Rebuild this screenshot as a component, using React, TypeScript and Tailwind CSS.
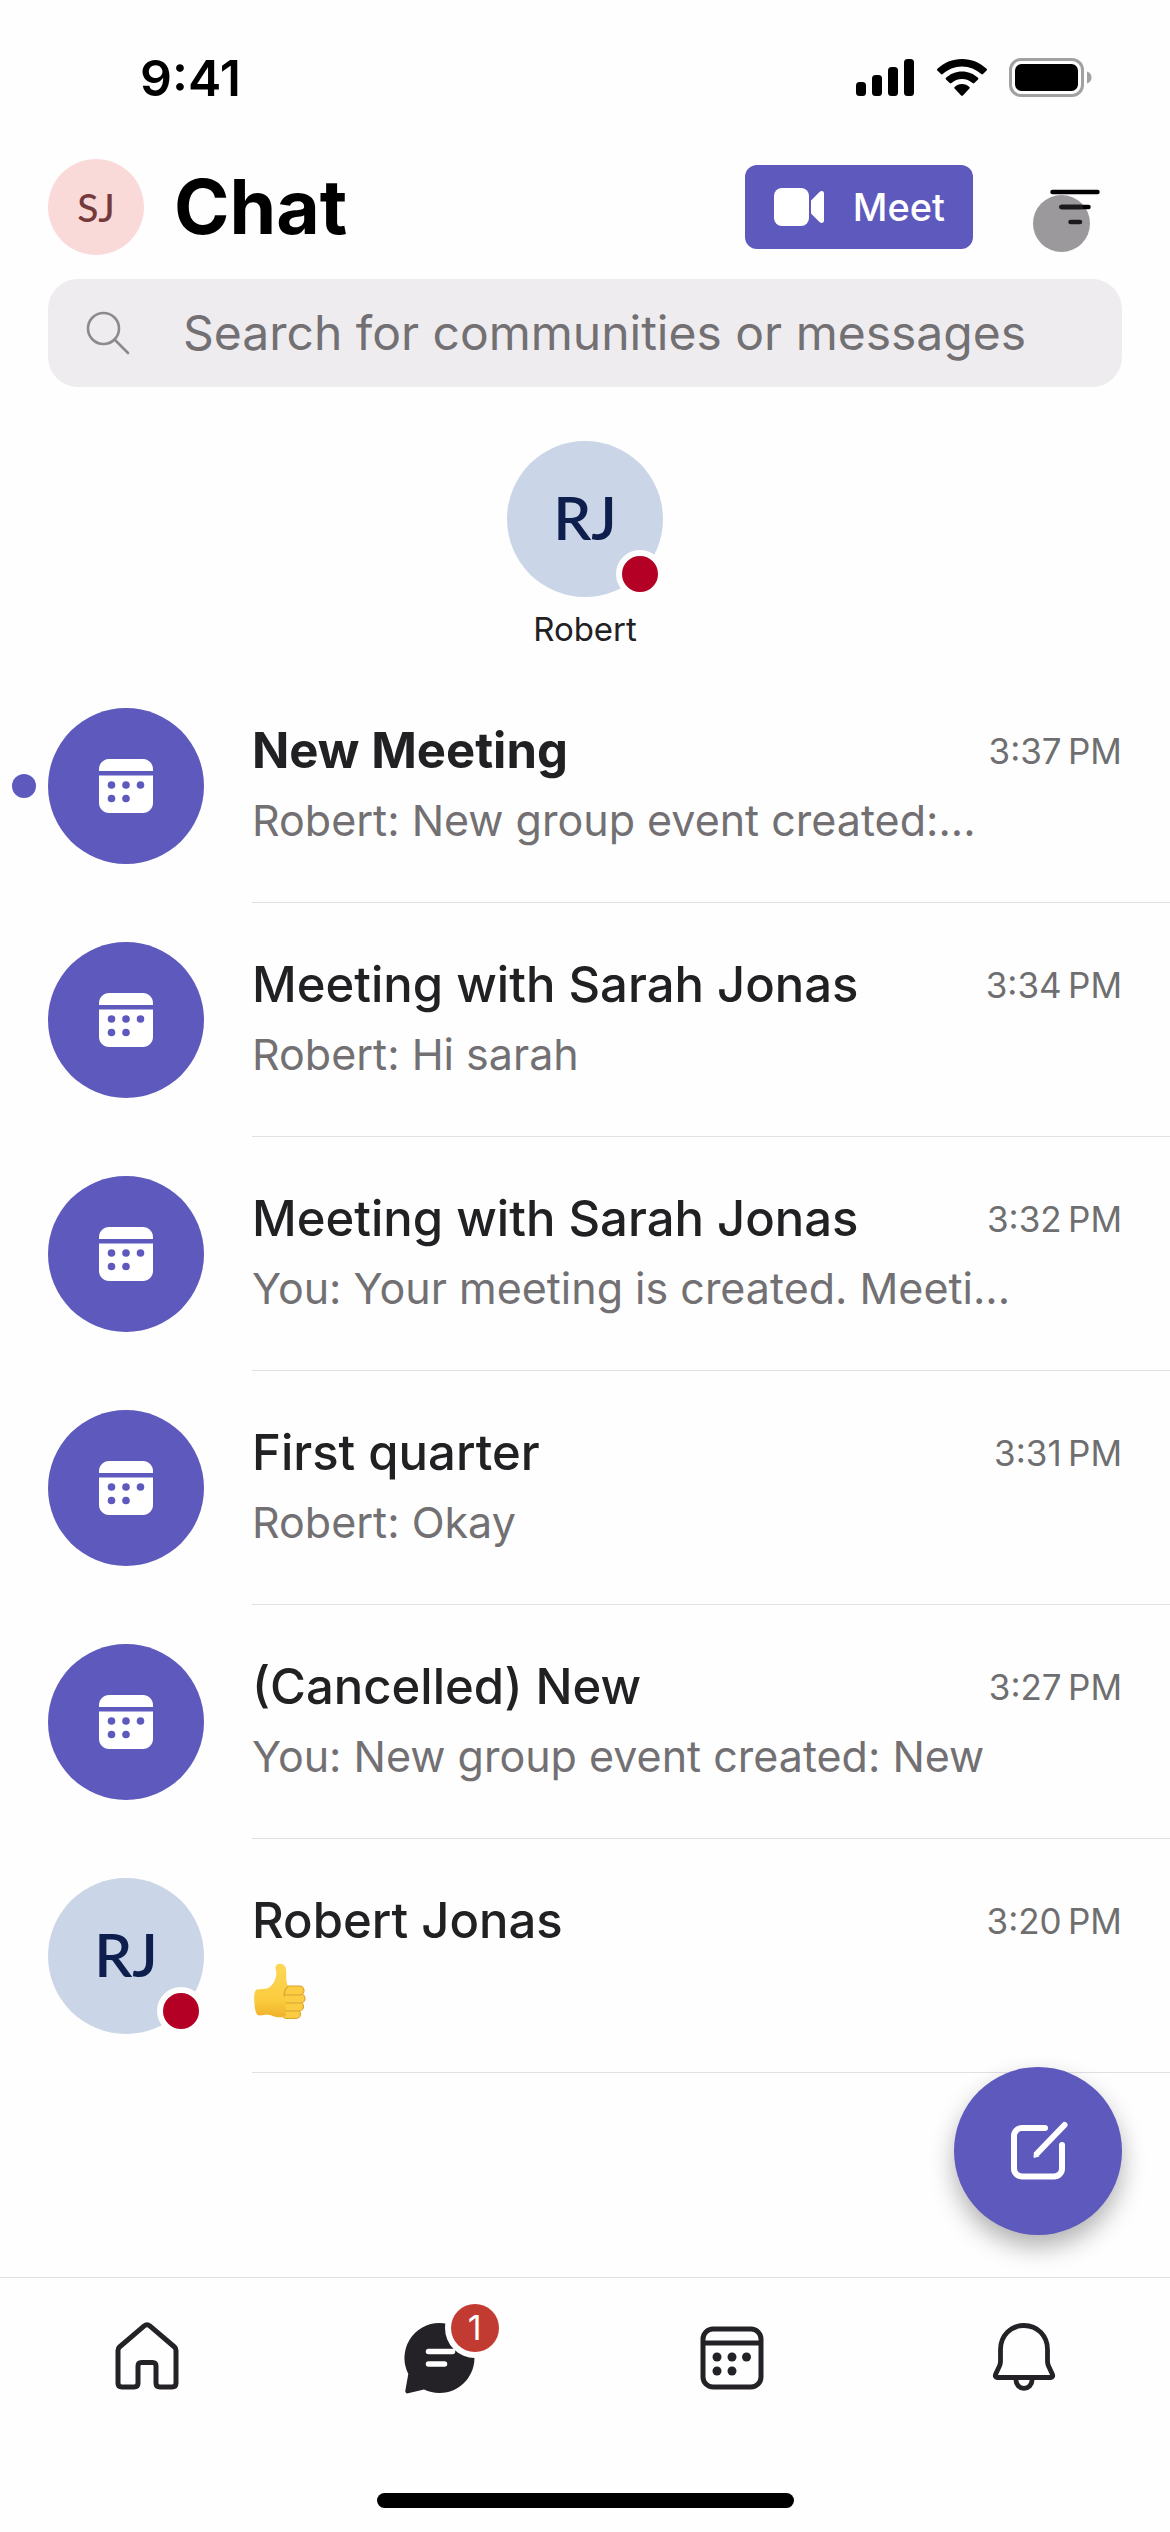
import { ReactNode } from 'react';

import clsx from 'clsx';

type ChatItem = {
  id: number;
  title: string;
  preview?: string;
  time: string;
  unread?: boolean;
  initials?: string;
};

const CHATS: ChatItem[] = [
  {
    id: 1,
    title: 'New Meeting',
    preview: 'Robert: New group event created:...',
    time: '3:37\u202fPM',
    unread: true,
  },
  { id: 2, title: 'Meeting with Sarah Jonas', preview: 'Robert: Hi sarah', time: '3:34\u202fPM' },
  {
    id: 3,
    title: 'Meeting with Sarah Jonas',
    preview: 'You: Your meeting is created. Meeti...',
    time: '3:32\u202fPM',
  },
  { id: 4, title: 'First quarter', preview: 'Robert: Okay', time: '3:31\u202fPM' },
  {
    id: 5,
    title: '(Cancelled) New',
    preview: 'You: New group event created: New',
    time: '3:27\u202fPM',
  },
  { id: 6, title: 'Robert Jonas', time: '3:20\u202fPM', initials: 'RJ' },
];

const StatusIcons = () => (
  <div className="flex items-center">
    <svg width="58" height="38" viewBox="0 0 58 38" className="mr-[23px]">
      <rect x="0" y="23" width="10" height="14" rx="3.5" />
      <rect x="16" y="16" width="10" height="21" rx="3.5" />
      <rect x="32" y="8" width="10" height="29" rx="3.5" />
      <rect x="48" y="0" width="10" height="37" rx="3.5" />
    </svg>
    <svg width="50" height="38" viewBox="0 0 50 38" className="mr-[22px]">
      <path d="M25 0C34.5 0 43.2 3.7 49.6 9.8c.5.5.5 1.2 0 1.7l-3.600 3.600c-.5.5-1.200.5-1.700 0C39.200 10.400 32.400 7.500 25 7.500S10.800 10.400 5.700 15.100c-.5.5-1.200.5-1.700 0L.4 11.500c-.5-.5-.5-1.200 0-1.700C6.800 3.700 15.500 0 25 0z" />
      <path d="M25 12.500c6.200 0 11.800 2.400 16 6.300.5.5.5 1.200 0 1.700l-3.700 3.600c-.5.5-1.200.5-1.700 0C32.800 21.600 29.100 20 25 20s-7.800 1.600-10.600 4.100c-.5.5-1.200.5-1.700 0L9 20.500c-.5-.5-.5-1.200 0-1.700 4.200-3.900 9.800-6.300 16-6.300z" />
      <path d="M25 25c2.900 0 5.500 1.100 7.400 2.900.5.5.5 1.200 0 1.700l-6.500 6.800c-.5.5-1.300.5-1.800 0l-6.500-6.800c-.5-.5-.5-1.200 0-1.700C19.500 26.100 22.100 25 25 25z" />
    </svg>
    <svg width="83" height="40" viewBox="0 0 83 40">
      <rect x="1.500" y="1.500" width="72" height="36" rx="10.500" fill="none" stroke="#a2a0a3" strokeWidth="3" />
      <rect x="6" y="6" width="63" height="27" rx="6.500" />
      <path d="M78 13.500c3 1 4.500 3.200 4.500 6s-1.500 5-4.500 6z" fill="#a2a0a3" />
    </svg>
  </div>
);

const CameraIcon = () => (
  <svg width="52" height="40" viewBox="0 0 52 40" fill="#fff" className="shrink-0">
    <rect x="1" y="1" width="35" height="38" rx="8" />
    <path d="M38 13.500L46.500 5c1.800-1.800 4.500-1.200 4.500 1.400v27.200c0 2.600-2.700 3.200-4.500 1.400L38 26.500z" />
  </svg>
);

const FilterIcon = () => (
  <svg width="50" height="36" viewBox="0 0 50 36" stroke="#000" strokeWidth="4.500" strokeLinecap="round">
    <path d="M2.500 3h45" />
    <path d="M11.500 18h27" />
    <path d="M11.500 18h19.500" stroke="#1c1a1d" />
    <path d="M20.500 33h9.500" stroke="#1c1a1d" />
  </svg>
);

const SearchIcon = () => (
  <svg
    width="44"
    height="44"
    viewBox="0 0 44 44"
    fill="none"
    stroke="#8c8a8d"
    strokeWidth="2.600"
    strokeLinecap="round"
    className="shrink-0"
  >
    <circle cx="17.500" cy="17.500" r="15.500" />
    <path d="M28.500 28.500L42 42" />
  </svg>
);

const MeetingIcon = () => (
  <svg width="54" height="54" viewBox="0 0 54 54" fill="#fff">
    <path d="M10 0h34c5.500 0 10 4.500 10 10v2H0v-2C0 4.500 4.500 0 10 0z" />
    <path d="M0 16.500h54V44c0 5.500-4.500 10-10 10H10C4.500 54 0 49.500 0 44z" />
    <g fill="#5d59bd">
      <circle cx="12.500" cy="26" r="3.800" />
      <circle cx="27" cy="26" r="3.800" />
      <circle cx="41.500" cy="26" r="3.800" />
      <circle cx="12.500" cy="39.500" r="3.800" />
      <circle cx="27" cy="39.500" r="3.800" />
    </g>
  </svg>
);

const ThumbsUp = () => (
  <svg width="56" height="58" viewBox="0 0 56 58" role="img" aria-label="Thumbs up">
    <defs>
      <linearGradient id="skin" x1="0" y1="0" x2="0" y2="1">
        <stop offset="0" stopColor="#fcd757" />
        <stop offset="0.7" stopColor="#fbcb3c" />
        <stop offset="1" stopColor="#eeb02c" />
      </linearGradient>
    </defs>
    <g fill="#fbcd42" stroke="#dda02a" strokeWidth="1.200">
      <rect x="30" y="47.500" width="18.500" height="9" rx="4.500" />
      <rect x="31" y="40" width="20.500" height="9" rx="4.500" />
      <rect x="31" y="32" width="22" height="9" rx="4.500" />
      <rect x="31" y="24" width="21" height="9" rx="4.500" />
    </g>
    <path
      d="M23.500 6c-.4-5.500 8.500-5.800 10.200-.5 1.300 4.500 0 9 .8 14 .4 2.500 1.500 3.500 1 5.500-2 3-2.500 6-2 10l.5 18c-4 3.500-10 2.500-14.500.5-4-1.800-9 .5-13.500-.2C3.500 52 2.500 45 2.200 38c-.1-6 .4-10 3-10.500 4-.8 7.800 0 11.300-1.500C21 23 24 17.500 24.300 12.500c.2-2.500-.6-4-.8-6.500z"
      fill="url(#skin)"
    />
    <path d="M35.500 25c-3 2-3.500 5-3 9" fill="none" stroke="#e2a532" strokeWidth="1.500" strokeLinecap="round" />
  </svg>
);

const ComposeIcon = () => (
  <svg
    width="60"
    height="60"
    viewBox="0 0 60 60"
    fill="none"
    stroke="#fff"
    strokeWidth="6"
    strokeLinecap="round"
  >
    <path d="M37 7H14C9.500 7 6 10.500 6 15v32.500c0 4.500 3.500 8 8 8h32c4.500 0 8-3.500 8-8V24" />
    <path d="M29 32.500L56.500 4" />
    <path d="M26 36l.5-5 4 4z" fill="#fff" strokeWidth="1" />
  </svg>
);

const HomeIcon = () => (
  <svg
    width="72"
    height="72"
    viewBox="0 0 72 72"
    fill="none"
    stroke="#242226"
    strokeWidth="5"
    strokeLinejoin="round"
  >
    <path d="M34.500 5.700a3.600 3.600 0 0 1 5 0L64.500 27c1.200 1 1.500 2 1.500 3.500V63c0 2.500-1.300 4-4 4h-12c-2.700 0-4-1.500-4-4V46c0-2.500-1-3.500-3.500-3.500H31.500c-2.500 0-3.500 1-3.500 3.500v17c0 2.500-1.300 4-4 4H12c-2.700 0-4-1.500-4-4V30.500c0-1.500.3-2.500 1.500-3.500z" />
  </svg>
);

const ChatIcon = () => (
  <svg width="72" height="74" viewBox="0 0 72 74">
    <path
      d="M36.500 3a35 35 0 1 1-15.500 66.400L5 73.300c-1.600.4-3-.8-2.700-2.500L5.300 54A35 35 0 0 1 36.500 3z"
      fill="#242226"
    />
    <circle cx="72" cy="8" r="30" fill="#fefefe" />
    <path d="M25.500 31.500h24M25.500 44h16" stroke="#fff" strokeWidth="5.500" strokeLinecap="round" />
  </svg>
);

const CalendarIcon = () => (
  <svg width="72" height="72" viewBox="0 0 72 72">
    <g fill="none" stroke="#242226" strokeWidth="5">
      <rect x="8" y="9" width="58" height="58" rx="10" />
      <path d="M8 23h58" />
    </g>
    <g fill="#242226">
      <circle cx="22" cy="37" r="4.500" />
      <circle cx="37" cy="37" r="4.500" />
      <circle cx="51.500" cy="37" r="4.500" />
      <circle cx="22" cy="51" r="4.500" />
      <circle cx="37" cy="51" r="4.500" />
    </g>
  </svg>
);

const BellIcon = () => (
  <svg
    width="72"
    height="72"
    viewBox="0 0 72 72"
    fill="none"
    stroke="#242226"
    strokeWidth="4.800"
    strokeLinejoin="round"
  >
    <path d="M36 5.500c13.500 0 23.500 10.500 23.500 24v12c0 1.500.3 2.600.8 4l4.200 9c.6 1.700-.2 3-1.500 3H9c-1.300 0-2.100-1.300-1.500-3l4.200-9c.5-1.400.8-2.500.8-4v-12c0-13.500 10-24 23.500-24z" />
    <path d="M28 58.500v1.800a8 8 0 0 0 16 0v-1.800" />
  </svg>
);

const PersonAvatar = ({ initials }: { initials: string }) => (
  <div className="relative flex size-[156px] shrink-0 items-center justify-center rounded-full bg-[#cad5e7] pb-1">
    <span className="font-['Lato',sans-serif] text-[60px] leading-none font-semibold text-[#0f1f4d]">
      {initials}
    </span>
    <span className="absolute -right-[1px] -bottom-[1px] size-12 rounded-full border-[6px] border-[#fefefe] bg-[#b30024]" />
  </div>
);

const ChatRow = ({ chat }: { chat: ChatItem }) => (
  <li>
    <a href="#" className="relative flex gap-12 pl-12">
      {chat.unread && (
        <span className="absolute top-[105px] left-3 size-6 rounded-full bg-[#5d59bd]" />
      )}
      <div className="my-[39px] shrink-0">
        {chat.initials ? (
          <PersonAvatar initials={chat.initials} />
        ) : (
          <div className="flex size-[156px] items-center justify-center rounded-full bg-[#5d59bd]">
            <MeetingIcon />
          </div>
        )}
      </div>
      <div className="min-w-0 flex-1 border-b border-[#e1e0e2] pt-[52px] pr-12">
        <div className="flex items-center justify-between gap-6">
          <h2
            className={clsx(
              'truncate text-[49px] leading-[60px] text-[#212023]',
              chat.unread ? 'font-bold' : 'font-medium'
            )}
          >
            {chat.title}
          </h2>
          <time className="shrink-0 text-[35px] leading-[60px] text-[#6f6e70]">{chat.time}</time>
        </div>
        <div className="mt-[11px] text-[43px] leading-14 text-[#727073]">
          {chat.preview ? <p className="truncate">{chat.preview}</p> : <ThumbsUp />}
        </div>
      </div>
    </a>
  </li>
);

const NavItem = ({
  label,
  badge,
  children,
}: {
  label: string;
  badge?: number;
  children: ReactNode;
}) => (
  <button type="button" aria-label={label} className="flex h-[72px] flex-1 justify-center">
    <span className="relative">
      {children}
      {badge && (
        <span className="absolute -top-4 left-12 flex size-12 items-center justify-center rounded-full bg-[#c23b33] text-[34px] leading-none text-white">
          {badge}
        </span>
      )}
    </span>
  </button>
);

export default function App() {
  return (
    <div className="flex min-h-screen flex-col bg-[#fefefe] font-['Inter',sans-serif]">
      <div className="flex items-center justify-between pt-[54px] pr-[78px] pb-[57px] pl-[140px]">
        <span className="text-[50px] leading-12 font-semibold text-black">9:41</span>
        <StatusIcons />
      </div>

      <header className="px-12">
        <div className="flex items-center">
          <button
            type="button"
            className="flex size-24 items-center justify-center rounded-full bg-[#f9dad9] font-['Lato',sans-serif] text-[39px] font-medium text-[#753939]"
          >
            SJ
          </button>
          <h1 className="ml-[30px] text-[75px] leading-24 font-bold text-black">Chat</h1>
          <button
            type="button"
            className="ml-auto flex h-[84px] items-center gap-7 rounded-xl bg-[#5d59bd] px-7 text-[38px] font-medium text-white"
          >
            <CameraIcon />
            Meet
          </button>
          <button type="button" aria-label="Filter" className="relative mr-[22px] ml-[77px]">
            <span className="absolute top-[6px] -left-[17px] size-[57px] rounded-full bg-[#9c999d]" />
            <span className="relative block">
              <FilterIcon />
            </span>
          </button>
        </div>
        <label className="mt-6 flex h-[108px] items-center gap-[53px] rounded-[30px] bg-[#eeecef] pr-6 pl-[38px]">
          <SearchIcon />
          <input
            type="search"
            aria-label="Search"
            placeholder="Search for communities or messages"
            className="min-w-0 flex-1 bg-transparent text-[48px] text-[#212023] outline-none placeholder:text-[#727073]"
          />
        </label>
      </header>

      <main className="relative flex-1">
        <div className="mt-[54px] mb-5 flex justify-center">
          <a href="#" className="flex flex-col items-center">
            <PersonAvatar initials="RJ" />
            <span className="mt-3 text-[33px] leading-10 text-[#212023]">Robert</span>
          </a>
        </div>
        <ul>
          {CHATS.map((chat) => (
            <ChatRow key={chat.id} chat={chat} />
          ))}
        </ul>
        <button
          type="button"
          aria-label="New chat"
          className="absolute right-12 bottom-[42px] flex size-42 items-center justify-center rounded-full bg-[#5d59bd] shadow-[0_12px_24px_rgba(0,0,0,0.3)]"
        >
          <ComposeIcon />
        </button>
      </main>

      <nav className="border-t border-[#dfdee0] pt-[42px]">
        <div className="flex">
          <NavItem label="Home">
            <HomeIcon />
          </NavItem>
          <NavItem label="Chat" badge={1}>
            <ChatIcon />
          </NavItem>
          <NavItem label="Calendar">
            <CalendarIcon />
          </NavItem>
          <NavItem label="Activity">
            <BellIcon />
          </NavItem>
        </div>
        <div className="mx-auto mt-[101px] mb-6 h-[15px] w-[417px] rounded-full bg-black" />
      </nav>
    </div>
  );
}
